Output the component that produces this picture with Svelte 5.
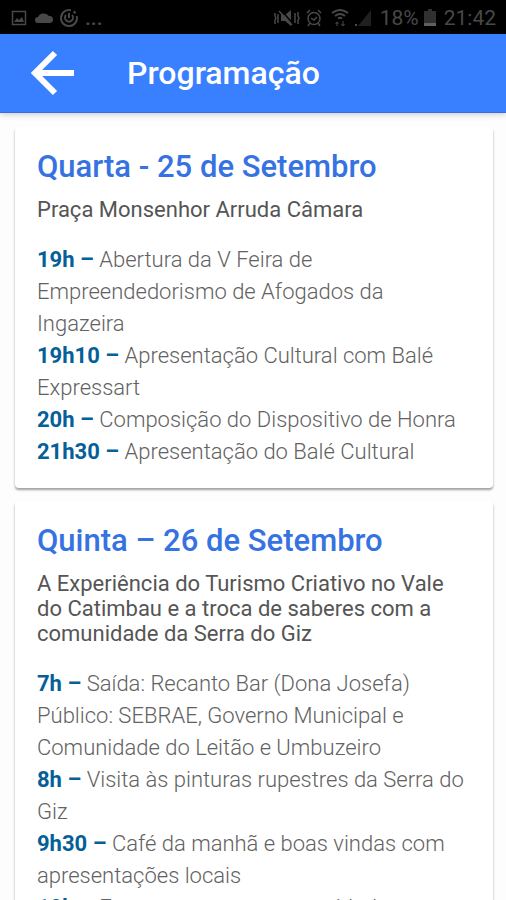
<script>
  const days = [
    {
      title: 'Quarta - 25 de Setembro',
      place: 'Praça Monsenhor Arruda Câmara',
      events: [
        ['19h', 'Abertura da V Feira de Empreendedorismo de Afogados da Ingazeira'],
        ['19h10', 'Apresentação Cultural com Balé Expressart'],
        ['20h', 'Composição do Dispositivo de Honra'],
        ['21h30', 'Apresentação do Balé Cultural']
      ]
    },
    {
      title: 'Quinta – 26 de Setembro',
      place: 'A Experiência do Turismo Criativo no Vale do Catimbau e a troca de saberes com a comunidade da Serra do Giz',
      events: [
        ['7h', 'Saída: Recanto Bar (Dona Josefa) Público: SEBRAE, Governo Municipal e Comunidade do Leitão e Umbuzeiro'],
        ['8h', 'Visita às pinturas rupestres da Serra do Giz'],
        ['9h30', 'Café da manhã e boas vindas com apresentações locais'],
        ['10h', 'Encontro com as comunidades']
      ]
    }
  ];
</script>

<div class="screen">
  <div class="status">
    <div class="group left">
      <svg width="16" height="16" viewBox="0 0 16 16"><path d="M1.5 1.5h13v13h-13z" fill="none" stroke="currentColor" stroke-width="1.5" /><path d="M3 12l3-4 2 2 3-3 2 5z" fill="currentColor" /></svg>
      <svg width="19" height="12" viewBox="0 0 19 12"><path d="M4 11a3 3 0 0 1 0-6 6 5 0 0 1 11-1 3.500 3.500 0 0 1 1 7z" fill="currentColor" /></svg>
      <svg width="18" height="18" viewBox="0 0 18 18" fill="none" stroke="currentColor" stroke-width="2"><path d="M11 1.300A8 8 0 1 0 16.700 7M13.500 2.400a8 8 0 0 1 2 2" /><path d="M6 6a4 4 0 1 0 6 0M9 4v5" /></svg>
      <span class="more">...</span>
    </div>
    <div class="group right">
      <svg class="mute" width="27" height="18" viewBox="0 0 27 18"><path d="M7 6h4l6-5v16l-6-5H7z" fill="currentColor" /><path d="M7 1l14 16" stroke="#000" stroke-width="1.500" /><path d="M5 2l13 14M1 4v3l1 2-1 2v4M4 5v9M21 4v10M24 3v4l1 2-1 2v4" fill="none" stroke="currentColor" stroke-width="1.500" /></svg>
      <svg class="alarm" width="16" height="18" viewBox="0 0 16 18" fill="none" stroke="currentColor" stroke-width="1.500"><circle cx="8" cy="9.500" r="6" /><path d="M5 9l3 2 3-3M1 4l3-3M12 1l3 3M4 14l-2 3M12 14l2 3" /></svg>
      <svg class="wifi" width="18" height="18" viewBox="0 0 18 18" fill="none" stroke="currentColor" stroke-width="2"><path d="M1 4q8-6 16 0M4 7q5-4 10 0M7 9.500q2-1.500 4 0" /><path d="M6 17v-4M4.500 15L6 13l1.500 2M12 12v4M10.500 15l1.500 2 1.500-2" stroke-width="1" /></svg>
      <svg class="signal" width="18" height="18" viewBox="0 0 18 18"><path d="M17 1v16H4z" fill="#202020" /><path d="M1 15h2v2H1z" fill="currentColor" /></svg>
      <span class="level">18%</span>
      <svg class="battery" width="12" height="18" viewBox="0 0 12 18"><path d="M4 0h4v2h4v12H0V2h4z" fill="#303030" /><path d="M0 14h12v3H0z" fill="#606060" /></svg>
      <span class="clock">21:42</span>
    </div>
  </div>

  <header>
    <button aria-label="Voltar">
      <svg width="44" height="46" viewBox="0 0 44 46" fill="none" stroke="#fff" stroke-width="6"><path d="M24 3L4 23l20 20M4 23h39" /></svg>
    </button>
    <h1>Programação</h1>
  </header>

  <main>
    {#each days as day}
      <section>
        <h2>{day.title}</h2>
        <h3>{day.place}</h3>
        <ul>
          {#each day.events as [time, text]}
            <li><b>{time} –</b> {text}</li>
          {/each}
        </ul>
      </section>
    {/each}
  </main>
</div>

<style>
  .screen {
    height: 100vh;
    display: flex;
    flex-direction: column;
    overflow: hidden;
    background: #fdfdfd;
    font-family: Roboto, sans-serif;
  }
  .status {
    flex: none;
    height: 34px;
    box-sizing: border-box;
    padding: 2px 10px 0 11px;
    display: flex;
    justify-content: space-between;
    align-items: center;
    background: #000;
    color: #484848;
    font-size: 21px;
    line-height: 32px;
  }
  .group {
    display: flex;
    align-items: center;
  }
  .left {
    gap: 7px;
  }
  .right {
    gap: 5px;
  }
  .wifi {
    margin-left: 4px;
  }
  .level,
  .clock {
    margin-left: 3px;
  }
  .more {
    font-weight: 500;
  }
  header {
    flex: none;
    height: 79px;
    box-sizing: border-box;
    padding-left: 31px;
    display: flex;
    align-items: center;
    gap: 52px;
    position: relative;
    background: #3880ff;
    border-bottom: 1px solid #3470d8;
    box-shadow: 0 1px 6px rgba(60, 60, 120, 0.3);
  }
  button {
    padding: 0;
    border: 0;
    background: none;
    display: flex;
  }
  h1 {
    margin: 0;
    color: #fff;
    font-size: 32px;
    font-weight: 500;
    line-height: 36px;
  }
  main {
    flex: 1;
    min-height: 0;
    overflow: hidden;
    padding: 14px 13px 0 15px;
  }
  section {
    margin-bottom: 13px;
    padding: 22px 22px 20px;
    border-radius: 4px;
    background: #fff;
    box-shadow: 0 2px 2px rgba(0, 0, 0, 0.26), 0 2px 3px rgba(0, 0, 0, 0.14);
  }
  h2 {
    margin: 0;
    color: #3672e2;
    font-size: 31px;
    font-weight: 500;
    line-height: 36px;
  }
  h3 {
    margin: 12px 0 22px;
    color: #555;
    font-size: 22px;
    font-weight: 400;
    line-height: 25px;
  }
  ul {
    margin: 0;
    padding: 0;
    list-style: none;
    color: #626262;
    font-size: 22px;
    font-weight: 300;
    line-height: 32px;
  }
  b {
    color: #055f98;
    font-weight: 700;
  }
</style>
